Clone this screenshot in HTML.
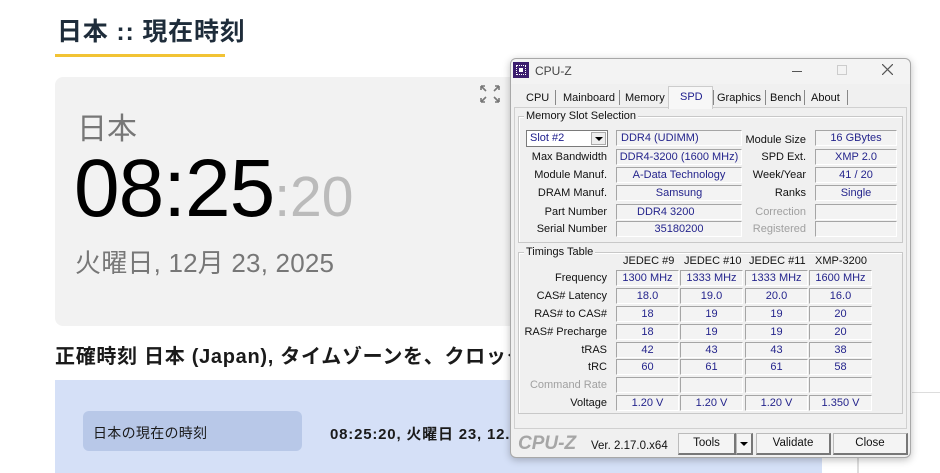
<!DOCTYPE html>
<html><head><meta charset="utf-8"><style>
*{margin:0;padding:0;box-sizing:border-box}
body{width:940px;height:473px;overflow:hidden;background:#fff;position:relative;font-family:"Liberation Sans","Noto Sans CJK JP",sans-serif}
.a{position:absolute}
.w{font-family:"Liberation Sans",sans-serif;font-size:11px;color:#111;white-space:nowrap}
.l{position:absolute;text-align:right;width:100px;font-size:11px;line-height:16px}
.f{position:absolute;height:16px;background:#f3f3f3;border-top:1px solid #a5a5a5;border-left:1px solid #a5a5a5;border-bottom:1px solid #fff;border-right:1px solid #fff;color:#24248c;font-size:11px;line-height:14px;text-align:center;overflow:hidden}
.g{position:absolute;border:1px solid #c8c8c8;box-shadow:1px 1px 0 #fff inset}
.gt{position:absolute;background:#f0f0f0;padding:0 2px;font-size:11px;line-height:12px}
.btn{position:absolute;height:22px;background:#f4f4f4;border:1px solid #bbb;border-right:2px solid #777;border-bottom:2px solid #777;text-align:center;line-height:19px;font-size:11.5px}
.gray{color:#a0a0a0}
</style></head><body>
<div class="a" style="left:57px;top:12px;font-size:25px;font-weight:bold;color:#1e2c3a;letter-spacing:0.8px">日本 :: 現在時刻</div>
<div class="a" style="left:55px;top:54px;width:170px;height:3px;background:#f2c334"></div>
<div class="a" style="left:55px;top:77px;width:470px;height:249px;background:#f2f2f2;border-radius:8px"></div>
<div class="a" style="left:77px;top:104px;font-size:30px;color:#777">日本</div>
<div class="a" style="left:74px;top:139px;font-size:82px;color:#000;line-height:100px;letter-spacing:-1px">08:25<span style="font-size:57px;color:#bbb;letter-spacing:0">:20</span></div>
<div class="a" style="left:75px;top:243px;font-size:26px;color:#777;letter-spacing:0.2px">火曜日, 12月 23, 2025</div>
<svg class="a" style="left:480px;top:85px" width="20" height="18" viewBox="0 0 20 18"><g stroke="#777" stroke-width="1.6" fill="none"><path d="M1 1l5 5M1 1h4M1 1v4M19 1l-5 5M19 1h-4M19 1v4M1 17l5-5M1 17h4M1 17v-4M19 17l-5-5M19 17h-4M19 17v-4"/></g></svg>
<div class="a" style="left:55px;top:340px;font-size:20px;font-weight:bold;color:#1a1a1a;white-space:nowrap;letter-spacing:0.7px">正確時刻 日本 (Japan), タイムゾーンを、クロック</div>
<div class="a" style="left:55px;top:380px;width:767px;height:93px;background:#d5e0f7"></div>
<div class="a" style="left:83px;top:411px;width:219px;height:40px;background:#b8c8e8;border-radius:6px"></div>
<div class="a" style="left:93px;top:423px;font-size:14px;color:#1a1a1a;letter-spacing:0.3px">日本の現在の時刻</div>
<div class="a" style="left:330px;top:423px;font-size:15px;font-weight:bold;color:#1a1a1a;white-space:nowrap;letter-spacing:0.8px">08:25:20, 火曜日 23, 12.</div>
<div class="a" style="left:912px;top:392px;width:28px;height:1px;background:#ddd"></div>
<div class="a" style="left:857px;top:458px;width:2px;height:15px;background:#ddd"></div>

<!-- CPU-Z window -->
<div class="a w" style="left:510px;top:58px;width:401px;height:400px;background:#f0f0f0;border:1px solid #a8a8a8;border-radius:6px;box-shadow:0 2px 8px rgba(0,0,0,.25)"></div>
<div class="a" style="left:511px;top:59px;width:399px;height:25px;background:#f3f3f3;border-radius:6px 6px 0 0"></div>
<div class="a" style="left:513px;top:62px;width:16px;height:16px;background:#3b1d6e"><div class="a" style="left:3px;top:3px;width:10px;height:10px;border:1px dotted #fff"></div><div class="a" style="left:6px;top:6px;width:4px;height:4px;background:#fff"></div></div>
<div class="a w" style="left:535px;top:64px;font-size:12px;color:#444">CPU-Z</div>
<div class="a" style="left:792px;top:71px;width:10px;height:1px;background:#555"></div>
<div class="a" style="left:837px;top:65px;width:10px;height:10px;border:1px solid #ccc"></div>
<svg class="a" style="left:882px;top:64px" width="11" height="11"><path d="M0 0L11 11M11 0L0 11" stroke="#555" stroke-width="1.2"/></svg>

<div class="a" style="left:514px;top:107px;width:393px;height:322px;border:1px solid #d0d0d0;background:#f0f0f0"></div>
<div class="a" style="left:668px;top:86px;width:45px;height:23px;background:#f7f7f7;border:1px solid #ccc;border-bottom:none"></div>
<div class="a w" style="left:526px;top:92px">CPU</div>
<div class="a" style="left:555px;top:90px;width:1px;height:15px;background:#888"></div>
<div class="a w" style="left:563px;top:92px">Mainboard</div>
<div class="a" style="left:619px;top:90px;width:1px;height:15px;background:#888"></div>
<div class="a w" style="left:625px;top:92px">Memory</div>
<div class="a w" style="left:680px;top:91px;color:#1c1c8c">SPD</div>
<div class="a" style="left:713px;top:90px;width:1px;height:15px;background:#888"></div>
<div class="a w" style="left:717px;top:92px">Graphics</div>
<div class="a" style="left:765px;top:90px;width:1px;height:15px;background:#888"></div>
<div class="a w" style="left:770px;top:92px">Bench</div>
<div class="a" style="left:804px;top:90px;width:1px;height:15px;background:#888"></div>
<div class="a w" style="left:811px;top:92px">About</div>
<div class="a" style="left:847px;top:90px;width:1px;height:15px;background:#888"></div>

<div class="g" style="left:518px;top:116px;width:385px;height:127px"></div>
<div class="gt w" style="left:524px;top:110px">Memory Slot Selection</div>
<div class="a w" style="left:526px;top:130px;width:82px;height:17px;background:#fff;border:1px solid #7a7a7a;color:#1c1c8c;line-height:15px;padding-left:3px">Slot #2<div class="a" style="right:1px;top:1px;width:15px;height:13px;background:#eee;border:1px solid #aaa"><div class="a" style="left:3px;top:4px;border-left:4px solid transparent;border-right:4px solid transparent;border-top:4px solid #000"></div></div></div>
<div class="w">
<div class="f" style="left:616px;top:130px;width:126px;text-align:left;padding-left:4px">DDR4 (UDIMM)</div>
<div class="l" style="left:507px;top:149px">Max Bandwidth</div><div class="f" style="left:616px;top:149px;width:126px">DDR4-3200 (1600 MHz)</div>
<div class="l" style="left:507px;top:167px">Module Manuf.</div><div class="f" style="left:616px;top:167px;width:126px">A-Data Technology</div>
<div class="l" style="left:507px;top:185px">DRAM Manuf.</div><div class="f" style="left:616px;top:185px;width:126px">Samsung</div>
<div class="l" style="left:507px;top:204px">Part Number</div><div class="f" style="left:616px;top:204px;width:126px;text-align:left;padding-left:20px">DDR4 3200</div>
<div class="l" style="left:507px;top:221px">Serial Number</div><div class="f" style="left:616px;top:221px;width:126px">35180200</div>
<div class="l" style="left:706px;top:132px">Module Size</div><div class="f" style="left:815px;top:130px;width:82px">16 GBytes</div>
<div class="l" style="left:706px;top:149px">SPD Ext.</div><div class="f" style="left:815px;top:149px;width:82px">XMP 2.0</div>
<div class="l" style="left:706px;top:167px">Week/Year</div><div class="f" style="left:815px;top:167px;width:82px">41 / 20</div>
<div class="l" style="left:706px;top:185px">Ranks</div><div class="f" style="left:815px;top:185px;width:82px">Single</div>
<div class="l gray" style="left:706px;top:204px">Correction</div><div class="f" style="left:815px;top:204px;width:82px"></div>
<div class="l gray" style="left:706px;top:221px">Registered</div><div class="f" style="left:815px;top:221px;width:82px"></div>
</div>

<div class="g" style="left:518px;top:252px;width:385px;height:162px"></div>
<div class="gt w" style="left:524px;top:246px">Timings Table</div>
<div class="w">
<div class="a" style="left:623px;top:255px">JEDEC #9</div>
<div class="a" style="left:684px;top:255px">JEDEC #10</div>
<div class="a" style="left:749px;top:255px">JEDEC #11</div>
<div class="a" style="left:815px;top:255px">XMP-3200</div>

<div class="l" style="left:507px;top:270px">Frequency</div>
<div class="f" style="left:616px;top:270px;width:63px">1300 MHz</div><div class="f" style="left:680px;top:270px;width:63px">1333 MHz</div><div class="f" style="left:745px;top:270px;width:63px">1333 MHz</div><div class="f" style="left:809px;top:270px;width:63px">1600 MHz</div>
<div class="l" style="left:507px;top:288px">CAS# Latency</div>
<div class="f" style="left:616px;top:288px;width:63px">18.0</div><div class="f" style="left:680px;top:288px;width:63px">19.0</div><div class="f" style="left:745px;top:288px;width:63px">20.0</div><div class="f" style="left:809px;top:288px;width:63px">16.0</div>
<div class="l" style="left:507px;top:306px">RAS# to CAS#</div>
<div class="f" style="left:616px;top:306px;width:63px">18</div><div class="f" style="left:680px;top:306px;width:63px">19</div><div class="f" style="left:745px;top:306px;width:63px">19</div><div class="f" style="left:809px;top:306px;width:63px">20</div>
<div class="l" style="left:497px;width:110px;top:324px">RAS# Precharge</div>
<div class="f" style="left:616px;top:324px;width:63px">18</div><div class="f" style="left:680px;top:324px;width:63px">19</div><div class="f" style="left:745px;top:324px;width:63px">19</div><div class="f" style="left:809px;top:324px;width:63px">20</div>
<div class="l" style="left:507px;top:342px">tRAS</div>
<div class="f" style="left:616px;top:342px;width:63px">42</div><div class="f" style="left:680px;top:342px;width:63px">43</div><div class="f" style="left:745px;top:342px;width:63px">43</div><div class="f" style="left:809px;top:342px;width:63px">38</div>
<div class="l" style="left:507px;top:359px">tRC</div>
<div class="f" style="left:616px;top:359px;width:63px">60</div><div class="f" style="left:680px;top:359px;width:63px">61</div><div class="f" style="left:745px;top:359px;width:63px">61</div><div class="f" style="left:809px;top:359px;width:63px">58</div>
<div class="l gray" style="left:497px;width:110px;top:377px">Command Rate</div>
<div class="f" style="left:616px;top:377px;width:63px"></div><div class="f" style="left:680px;top:377px;width:63px"></div><div class="f" style="left:745px;top:377px;width:63px"></div><div class="f" style="left:809px;top:377px;width:63px"></div>
<div class="l" style="left:507px;top:395px">Voltage</div>
<div class="f" style="left:616px;top:395px;width:63px">1.20 V</div><div class="f" style="left:680px;top:395px;width:63px">1.20 V</div><div class="f" style="left:745px;top:395px;width:63px">1.20 V</div><div class="f" style="left:809px;top:395px;width:63px">1.350 V</div>
</div>

<div class="a" style="left:518px;top:433px;font-size:19px;font-weight:bold;font-style:italic;color:#a6a6a6;font-family:'Liberation Sans',sans-serif">CPU-Z</div>
<div class="a w" style="left:591px;top:440px;font-size:11.5px">Ver. 2.17.0.x64</div>
<div class="btn w" style="left:678px;top:433px;width:58px">Tools</div>
<div class="btn" style="left:736px;top:433px;width:17px"><div class="a" style="left:3px;top:8px;border-left:4px solid transparent;border-right:4px solid transparent;border-top:4px solid #000"></div></div>
<div class="btn w" style="left:756px;top:433px;width:75px">Validate</div>
<div class="btn w" style="left:833px;top:433px;width:75px">Close</div>
</body></html>
